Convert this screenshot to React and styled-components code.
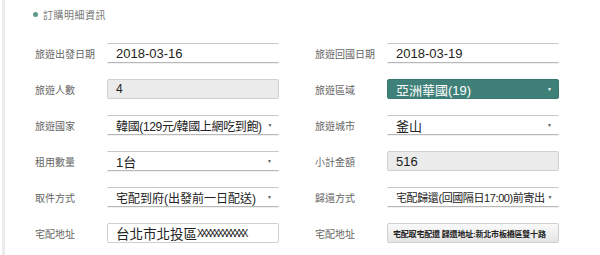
import React from "react";
import styled, { createGlobalStyle } from "styled-components";

const GlobalStyle = createGlobalStyle`
  body {
    margin: 0;
    background: #fff;
    font-family: "Liberation Sans", Arial, "Noto Sans CJK TC", sans-serif;
  }
`;

const Panel = styled.div`
  width: 600px;
  height: 255px;
  box-sizing: border-box;
  border-left: 3px solid #ececec;
  margin-left: 2px;
  padding: 7px 0 0 28px;
  overflow: hidden;
`;

const Heading = styled.div`
  display: flex;
  align-items: center;
  gap: 5px;
  height: 14px;
  font-size: 10px;
  color: #777;
  letter-spacing: 0.5px;
  font-family: "Noto Sans CJK TC", sans-serif;
  &::before {
    content: "";
    width: 5px;
    height: 5px;
    border-radius: 50%;
    background: #5a9a8a;
  }
`;

const Grid = styled.div`
  display: grid;
  grid-template-columns: 244px 244px;
  column-gap: 36px;
  row-gap: 16px;
  margin-top: 22px;
  padding-left: 2px;
`;

const Field = styled.div`
  display: flex;
  align-items: center;
  height: 20px;
`;

const Label = styled.div`
  width: 72px;
  font-size: 10px;
  color: #666;
  font-family: "Noto Sans CJK TC", sans-serif;
`;

const Control = styled.div`
  position: relative;
  width: 172px;
  height: 20px;
  box-sizing: border-box;
  display: flex;
  align-items: center;
  padding-left: ${(p) => (p.$small ? "5px" : "8px")};
  font-size: ${(p) => p.$size || 12}px;
  letter-spacing: ${(p) => p.$track || 0}px;
  font-weight: ${(p) => (p.$small ? "bold" : "normal")};
  white-space: nowrap;
  overflow: hidden;
  color: ${(p) => (p.$variant === "teal" ? "#fff" : "#222")};
  background: ${(p) =>
    p.$variant === "teal"
      ? "#3f8178"
      : p.$variant === "gray"
      ? "#ebebeb"
      : p.$variant === "button"
      ? "linear-gradient(#fafafa, #e4e4e4)"
      : "#fff"};
  border: 1px solid
    ${(p) =>
      p.$variant === "teal"
        ? "#3a7a70"
        : p.$variant === "plain"
        ? "#fff"
        : "#cfcfcf"};
  border-top-color: ${(p) => (p.$variant === "plain" ? "#c8c8c8" : undefined)};
  border-bottom-color: ${(p) => (p.$variant === "plain" ? "#b8b8b8" : undefined)};
  border-radius: ${(p) => (p.$variant === "plain" ? "0" : "2px")};
  box-shadow: ${(p) =>
    p.$variant === "plain" ? "0 1px 1px rgba(0,0,0,0.06)" : "none"};
  font-family: "Liberation Sans", Arial, "Noto Sans CJK TC", sans-serif;
`;

const Narrow = styled.span`
  font-size: 10px;
  letter-spacing: -2.6px;
`;

const Arrow = styled.span`
  position: absolute;
  right: 6px;
  top: 6px;
  font-size: 5px;
  color: ${(p) => (p.$light ? "#fff" : "#555")};
`;

const fields = [
  { label: "旅遊出發日期", value: "2018-03-16", variant: "plain", size: 13 },
  { label: "旅遊回國日期", value: "2018-03-19", variant: "plain", size: 13 },
  { label: "旅遊人數", value: "4", variant: "gray" },
  { label: "旅遊區域", value: "亞洲華國(19)", variant: "teal", select: true, size: 13 },
  { label: "旅遊國家", value: "韓國(129元/韓國上網吃到飽)", variant: "plain", select: true, track: -0.35 },
  { label: "旅遊城市", value: "釜山", variant: "plain", select: true, size: 13 },
  { label: "租用數量", value: "1台", variant: "plain", select: true, size: 13 },
  { label: "小計金額", value: "516", variant: "gray", size: 13 },
  { label: "取件方式", value: "宅配到府(出發前一日配送)", variant: "plain", select: true },
  { label: "歸還方式", value: "宅配歸還(回國隔日17:00)前寄出", variant: "plain", select: true, size: 11, track: -0.4 },
  { label: "宅配地址", value: "台北市北投區", tail: "XXXXXXXXXXXX", variant: "outline", size: 13.5 },
  { label: "宅配地址", value: "宅配取宅配還 歸還地址:新北市板橋區雙十路", variant: "button", small: true, size: 8, track: -0.2 },
];

export default function App() {
  return (
    <>
      <GlobalStyle />
      <Panel>
        <Heading>訂購明細資訊</Heading>
        <Grid>
          {fields.map((f, i) => (
            <Field key={i}>
              <Label>{f.label}</Label>
              <Control
                $variant={f.variant}
                $small={f.small}
                $size={f.size}
                $track={f.track}
              >
                {f.value}
                {f.tail && <Narrow>{f.tail}</Narrow>}
                {f.select && <Arrow $light={f.variant === "teal"}>▼</Arrow>}
              </Control>
            </Field>
          ))}
        </Grid>
      </Panel>
    </>
  );
}
